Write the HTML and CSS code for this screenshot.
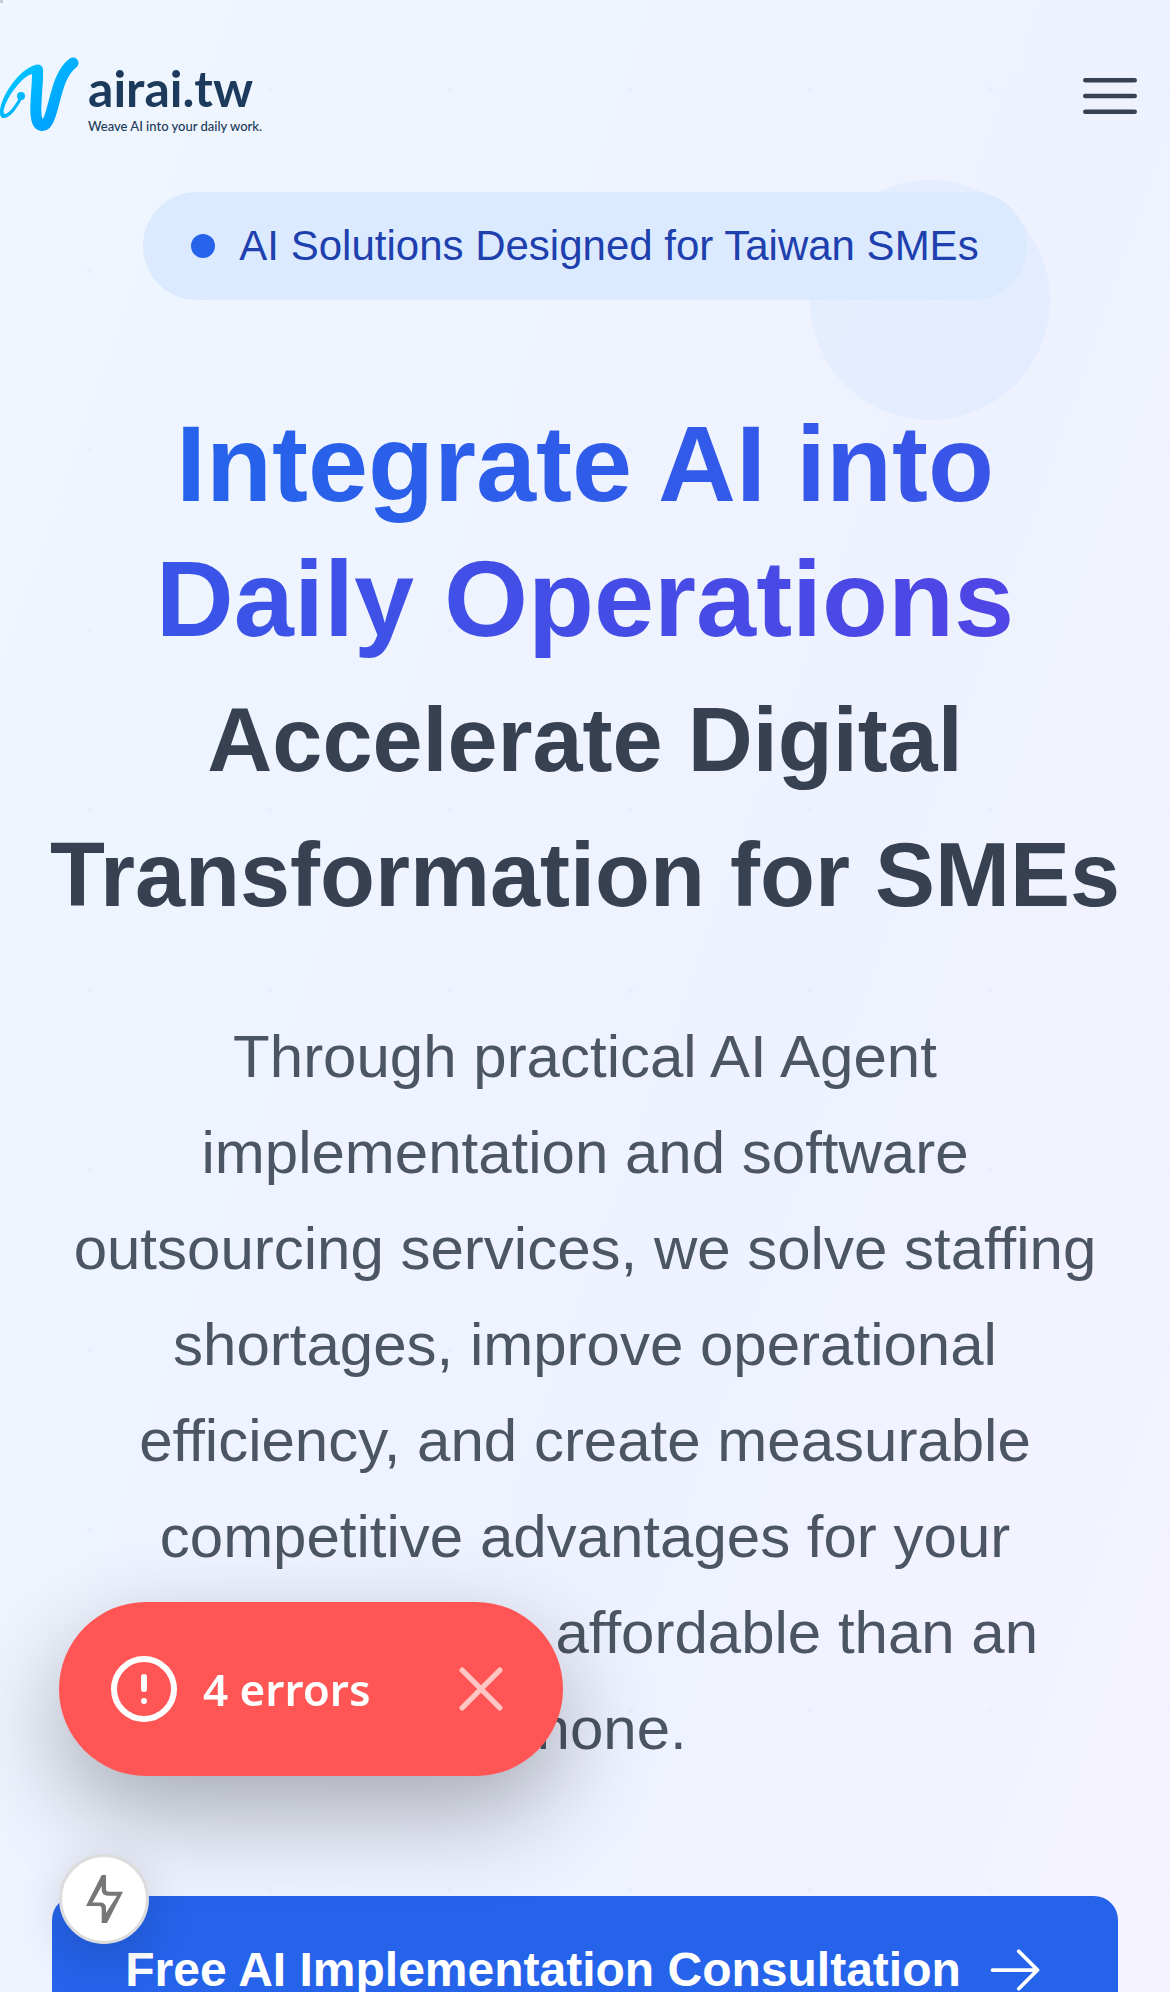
FILE: index.html
```html
<!DOCTYPE html>
<html lang="en">
<head>
<meta charset="utf-8">
<meta name="viewport" content="width=device-width, initial-scale=1">
<title>airai.tw</title>
<link rel="stylesheet" href="styles.css">
</head>
<body>
<div class="page">
  <span class="corner-mark"></span>
  <span class="orb"></span>
  <header class="site-header">
    <a class="logo" href="#">
      <svg class="logo-mark" viewBox="0 0 80 80" fill="none" stroke-linecap="round" stroke-linejoin="round" aria-hidden="true">
        <defs>
          <linearGradient id="brand" x1="0" y1="10" x2="60" y2="70" gradientUnits="userSpaceOnUse">
            <stop offset="0" stop-color="#00ccff"/>
            <stop offset="1" stop-color="#009dff"/>
          </linearGradient>
        </defs>
        <path d="M0 56C0 42 18 14 35 9C41 7 44 11 43 18L42 30H32Q34 22 33 18C25 18 13 34 8 43C4 51 2 57 5 58C9 58 16 48 19 42L22 43C18 50 11 62 4 62C1 62 0 60 0 56Z" fill="url(#brand)"/>
        <path d="M37.500 15C38 27 35 47 36 58C37 73 46 73 50 60C56 43 58 18 73 7" stroke="url(#brand)" stroke-width="11"/>
        <circle cx="21" cy="40" r="4" fill="url(#brand)"/>
      </svg>
      <span class="logo-text">
        <span class="logo-name">airai.tw</span>
        <span class="logo-tagline">Weave AI into your daily work.</span>
      </span>
    </a>
    <button class="menu-button" type="button" aria-label="Open menu">
      <svg viewBox="0 0 24 24" fill="none" stroke="currentColor" stroke-width="1.5" stroke-linecap="round"><path d="M3.75 6.75h16.5M3.75 12h16.5M3.75 17.25h16.5"/></svg>
    </button>
  </header>
  <main class="hero">
    <p class="badge"><span class="badge-dot"></span>AI Solutions Designed for Taiwan SMEs</p>
    <h1 class="title">
      <span class="title-main"><span class="title-gradient">Integrate AI into Daily Operations</span></span>
      <span class="title-sub">Accelerate Digital Transformation for SMEs</span>
    </h1>
    <p class="lead">Through practical AI Agent implementation and software outsourcing services, we solve staffing shortages, improve operational efficiency, and create measurable competitive advantages for your business. More affordable than an iPhone.</p>
    <a class="cta" href="#">Free AI Implementation Consultation
      <svg class="cta-arrow" viewBox="0 0 24 24" fill="none" stroke="currentColor" stroke-width="1.5" stroke-linecap="round" stroke-linejoin="round" aria-hidden="true"><path d="M13.5 4.5 21 12m0 0-7.5 7.5M21 12H3"/></svg>
    </a>
  </main>
</div>
<div class="toast" role="alert">
  <svg class="toast-icon" viewBox="0 0 66 66" fill="none" stroke="currentColor" stroke-width="6" stroke-linecap="round" aria-hidden="true"><circle cx="33" cy="33" r="30"/><path d="M33 21V33M33 45V45.1"/></svg>
  <span class="toast-text">4 errors</span>
  <button class="toast-close" type="button" aria-label="Close">
    <svg viewBox="0 0 42 42" fill="none" stroke="currentColor" stroke-width="5" stroke-linecap="round"><path d="M3 3 39 39M39 3 3 39"/></svg>
  </button>
</div>
<button class="dev-button" type="button" aria-label="Build indicator">
  <svg viewBox="0 0 37 48" fill="currentColor" fill-rule="evenodd" aria-hidden="true"><path d="M15.700 0H20V14Q20 16.700 23 16.700H37L21 48H15.700V34Q15.700 31 13 31H0ZM15.700 11L6.500 27.500H14Q20 27.500 20 33V38L31 20.700H22Q15.700 20.700 15.700 14.500Z"/></svg>
</button>
</body>
</html>
```

FILE: styles.css
```css
* { box-sizing: border-box; }

body {
  margin: 0;
  font-family: "Liberation Sans", Arial, sans-serif;
  color: #374151;
}

.page {
  position: relative;
  height: 100vh;
  overflow: hidden;
  background:
    radial-gradient(circle at 90px 90px, rgba(148, 163, 184, 0.05) 0 3px, transparent 3px) 0 0 / 180px 180px,
    linear-gradient(to bottom right, #eff6ff, #eef2ff 50%, #faf5ff) 0 0 / 100% 3340px;
}

.corner-mark {
  position: absolute;
  top: 0;
  left: 0;
  width: 3px;
  height: 3px;
  background: #c8ced8;
}

.orb {
  position: absolute;
  top: 180px;
  right: 120px;
  width: 240px;
  height: 240px;
  border-radius: 50%;
  background: #bfdbfe;
  opacity: 0.2;
}

.site-header {
  display: flex;
  align-items: center;
  justify-content: space-between;
  height: 192px;
  padding-right: 24px;
}

.logo {
  display: flex;
  align-items: center;
  gap: 8px;
  color: #1c3a5b;
  text-decoration: none;
}

.logo-mark { width: 80px; height: 80px; }

.logo-text {
  display: flex;
  flex-direction: column;
  font-family: Lato, sans-serif;
}

.logo-name {
  font-size: 50px;
  font-weight: 700;
  line-height: 60px;
}

.logo-tagline {
  font-size: 13px;
  font-weight: 500;
  line-height: 16px;
}

.menu-button {
  display: flex;
  width: 72px;
  height: 72px;
  padding: 0;
  border: 0;
  background: none;
  color: #374151;
}

.hero {
  position: relative;
  display: flex;
  flex-direction: column;
  align-items: center;
  padding: 0 52px;
  text-align: center;
}

.badge {
  display: flex;
  align-items: center;
  gap: 24px;
  margin: 0 0 96px;
  padding: 24px 48px;
  border-radius: 54px;
  background: #dbeafe;
  color: #1e40af;
  font-size: 42px;
  line-height: 60px;
}

.badge-dot {
  width: 24px;
  height: 24px;
  border-radius: 50%;
  background: #2563eb;
}

.title {
  display: flex;
  flex-direction: column;
  align-items: center;
  gap: 7px;
  margin: 0 -12px 66px;
  line-height: 135px;
}

.title-main {
  max-width: 900px;
  font-size: 108px;
}

.title-gradient {
  background: linear-gradient(to right, #2563eb, #4f46e5);
  background-clip: text;
  color: transparent;
}

.title-sub { font-size: 90px; }

.lead {
  margin: 0 0 119px;
  color: #4b5563;
  font-size: 60px;
  line-height: 96px;
}

.cta {
  display: flex;
  align-items: center;
  justify-content: center;
  gap: 24px;
  align-self: stretch;
  padding: 38px 0;
  border-radius: 24px;
  background: #2563eb;
  color: #fff;
  font-size: 48px;
  font-weight: 600;
  line-height: 72px;
  text-decoration: none;
}

.cta-arrow { width: 60px; height: 60px; }

.toast {
  position: fixed;
  left: 59px;
  bottom: 216px;
  display: flex;
  align-items: center;
  width: 504px;
  height: 174px;
  padding: 0 60px 0 52px;
  border-radius: 87px;
  background: #ff5555;
  color: #fff;
  font-family: "Noto Sans", sans-serif;
  box-shadow: 0 36px 96px rgba(0, 0, 0, 0.3);
}

.toast-icon { width: 66px; height: 66px; }

.toast-text {
  margin-left: 26px;
  font-size: 44px;
  font-weight: 600;
}

.toast-close {
  display: flex;
  width: 44px;
  height: 44px;
  margin-left: auto;
  padding: 0;
  border: 0;
  background: none;
  color: #ffc6c6;
}

.dev-button {
  position: fixed;
  left: 59px;
  bottom: 48px;
  display: flex;
  align-items: center;
  justify-content: center;
  width: 90px;
  height: 90px;
  padding: 0;
  border: 3px solid #dcdcdc;
  border-radius: 50%;
  background: #fff;
  color: #777;
  box-shadow: 0 12px 48px rgba(0, 0, 0, 0.16);
}

.dev-button svg { width: 37px; height: 48px; }
```
